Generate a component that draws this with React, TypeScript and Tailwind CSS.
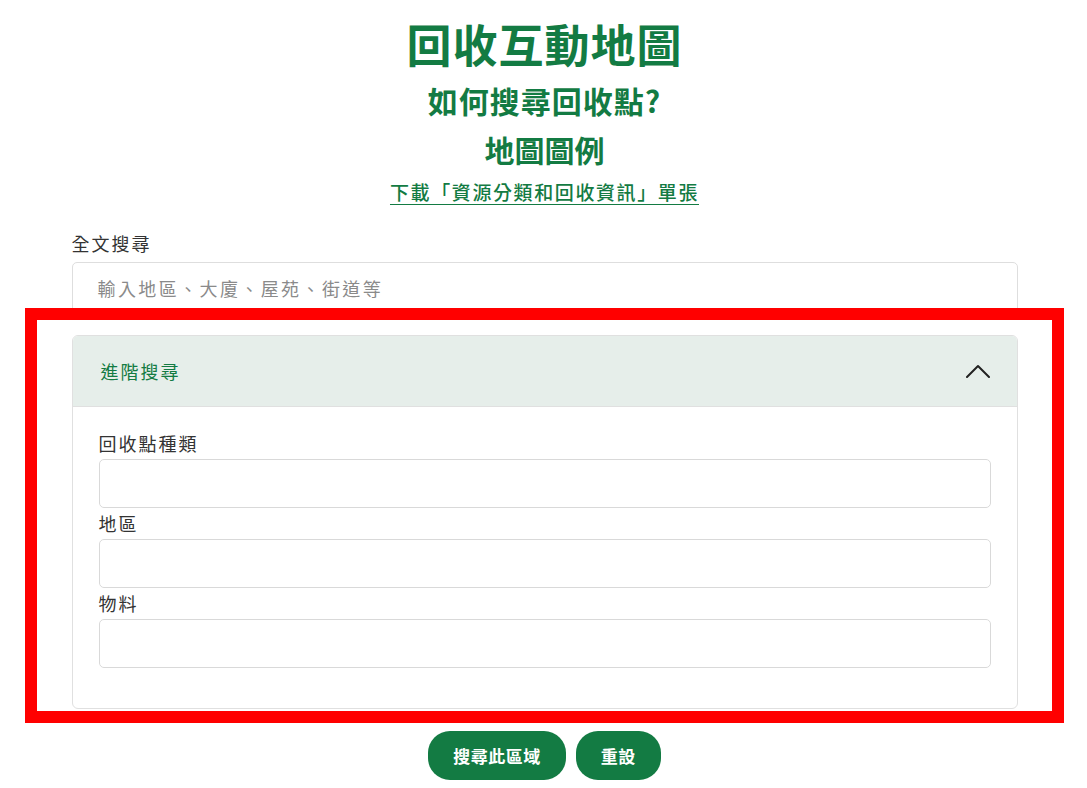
const font = {
  fontFamily: '"Noto Sans CJK TC", "Noto Sans", sans-serif',
};

// 篩選欄位
function Field({ label }: { label: string }) {
  return (
    <div>
      <label className="block text-[18px] leading-[24px] tracking-[2px] text-[#333] mb-[4px]">{label}</label>
      <div className="h-[49px] w-full rounded-[5px] border border-[#d9d9d9] bg-white" />
    </div>
  );
}

export default function App() {
  return (
    <div className="relative min-h-[788px] bg-white" style={font}>
      <div className="mx-auto w-[948px] pt-[14px] pl-[2px]">
        <div className="flex flex-col items-center text-[#137b43]">
          <h1 className="text-[45px] leading-[60px] font-bold tracking-[1px]">回收互動地圖</h1>
          <h2 className="mt-[6px] text-[30px] leading-[40px] font-bold tracking-[1px]">如何搜尋回收點?</h2>
          <h3 className="mt-[9px] text-[30px] leading-[40px] font-bold">地圖圖例</h3>
          <a className="mt-[9px] text-[19px] leading-[28px] font-medium underline underline-offset-[4px] tracking-[1.6px]" href="#">
            下載「資源分類和回收資訊」單張
          </a>
        </div>

        <div className="mt-[25px]">
          <label className="block text-[18px] leading-[24px] tracking-[2px] text-[#333]">全文搜尋</label>
          <div className="mt-[7px] flex h-[52px] items-center rounded-[5px] border border-[#dedede] px-[25px] text-[18px] tracking-[2.4px] text-[#8a8a8a]">
            輸入地區、大廈、屋苑、街道等
          </div>
        </div>

        <div className="mt-[21px] rounded-[6px] border border-[#e0e0e0] overflow-hidden">
          <div className="flex h-[71px] items-center justify-between bg-[#e6eeea] border-b border-[#e0e0e0] pl-[28px] pr-[27px]">
            <span className="text-[18px] tracking-[2px] text-[#137b43]">進階搜尋</span>
            <svg width="24" height="14" viewBox="0 0 24 14" fill="none" stroke="#222" strokeWidth="2" strokeLinecap="round" strokeLinejoin="round">
              <polyline points="1,13 12,2 23,13" />
            </svg>
          </div>
          <div className="flex flex-col gap-[3px] px-[26px] pt-[24px] pb-[40px]">
            <Field label="回收點種類" />
            <Field label="地區" />
            <Field label="物料" />
          </div>
        </div>

        <div className="mt-[22px] flex justify-center gap-[10px]">
          <button className="h-[49px] rounded-[22px] bg-[#137b43] px-[25px] text-[17px] tracking-[0.5px] font-bold text-white">搜尋此區域</button>
          <button className="h-[49px] rounded-[22px] bg-[#137b43] px-[25px] text-[17px] tracking-[0.5px] font-bold text-white">重設</button>
        </div>
      </div>

      {/* 標示框 */}
      <div className="pointer-events-none absolute left-[25px] top-[308px] h-[415px] w-[1039px] border-[12px] border-[#ff0000]" />
    </div>
  );
}
